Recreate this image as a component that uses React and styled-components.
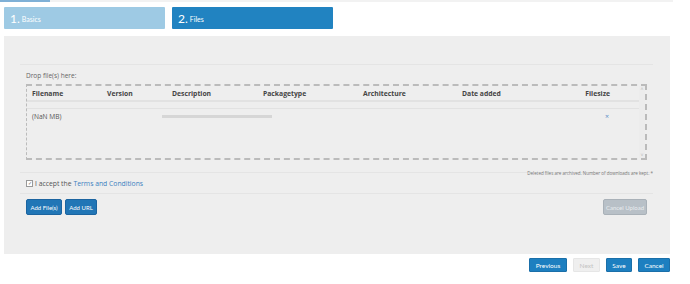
import styled, { createGlobalStyle } from "styled-components";

const Global = createGlobalStyle`
  body {
    margin: 0;
    background: #fff;
    font-family: "Open Sans", "Liberation Sans", sans-serif;
    color: #555;
  }
`;

const TopStrip = styled.div`
  display: flex;
  width: 673px;
  height: 2px;
  background: #f2f2f2;
`;

const TopMark = styled.div`
  width: 50px;
  background: #7fb0d6;
`;

const Steps = styled.div`
  display: flex;
  gap: 7px;
  padding: 5px 0 0 4px;
`;

const Step = styled.div`
  width: 161px;
  height: 22px;
  box-sizing: border-box;
  display: flex;
  align-items: center;
  padding-left: 6px;
  background: ${(p) => (p.active ? "#2183c1" : "#9ecae4")};
  border-radius: 1px;
  color: #fff;
  font-family: Lato, "Open Sans", sans-serif;
`;

const StepNum = styled.span`
  font-size: 12px;
  margin-right: 2px;
`;

const StepLabel = styled.span`
  font-size: 7px;
  padding-top: 2px;
`;

const Panel = styled.div`
  margin: 7px 0 0 4px;
  width: 666px;
  height: 218px;
  box-sizing: border-box;
  background: #eeeeee;
  padding: 0 17px 0 16px;
`;

const Rule = styled.div`
  height: ${(p) => p.h || 0}px;
  border-bottom: 1px solid #e4e4e4;
`;

const Inner = styled.div`
  padding: 0 6px;
`;

const DropLabel = styled.div`
  font-size: 6.5px;
  color: #666;
  padding: 6px 0 4px;
`;

const DropBox = styled.div`
  display: flex;
  height: 76px;
  box-sizing: border-box;
  border: 1px dashed #bbb;
  border-width: 2px 2px 2px 1px;
`;

const Table = styled.div`
  flex: 1;
`;

const HeadRow = styled.div`
  display: grid;
  grid-template-columns: 75px 65px 91px 100px 99px 100px 48px;
  height: 14px;
  align-items: center;
  padding-left: 5px;
  border-bottom: 2px solid #e2e2e2;
  font-size: 6.8px;
  font-weight: 700;
  color: #444;
`;

const Cell = styled.div`
  text-align: ${(p) => (p.right ? "right" : "left")};
  white-space: nowrap;
`;

const Spacer = styled.div`
  height: 6px;
  border-bottom: 1px solid #e2e2e2;
`;

const DataRow = styled.div`
  display: grid;
  grid-template-columns: 130px 110px 1fr 20px;
  height: 15px;
  align-items: center;
  padding-left: 5px;
  padding-right: 22px;
  font-size: 6.6px;
  color: #555;
`;

const Progress = styled.div`
  width: 110px;
  height: 3px;
  background: #d6d6d6;
`;

const Remove = styled.div`
  font-size: 7px;
  color: #5b8fc7;
  text-align: center;
`;

const Scroll = styled.div`
  width: 6px;
  display: flex;
  flex-direction: column;
  justify-content: space-between;
  align-items: center;
  font-size: 5px;
  color: #bbb;
  line-height: 6px;
  background: #ececec;
`;

const Note = styled.div`
  text-align: right;
  font-size: 4.5px;
  color: #777;
  padding: 10px 0 0;
  height: 13px;
  box-sizing: border-box;
  margin: 0 -6px;
  border-bottom: 1px solid #e4e4e4;
`;

const Accept = styled.div`
  display: flex;
  align-items: center;
  gap: 2px;
  height: 20px;
  font-size: 6.8px;
  color: #555;
  border-bottom: 1px solid #e4e4e4;
  margin: 0 -6px;
  padding-left: 6px;
`;

const Check = styled.span`
  width: 5px;
  height: 5px;
  border: 1px solid #999;
  display: inline-flex;
  align-items: center;
  justify-content: center;
  font-size: 5px;
  line-height: 1;
  color: #666;
  background: #fff;
`;

const Link = styled.span`
  color: #3a7fc0;
`;

const Actions = styled.div`
  display: flex;
  gap: 3px;
  padding-top: 5px;
`;

const Btn = styled.div`
  height: 16px;
  box-sizing: border-box;
  display: flex;
  align-items: center;
  justify-content: center;
  white-space: nowrap;
  font-family: Lato, "Open Sans", sans-serif;
  font-size: 6px;
  border-radius: 2px;
  color: ${(p) => (p.disabled ? (p.grey ? "#e8ecef" : "#c4c4c4") : "#fff")};
  background: ${(p) =>
    p.grey ? "#b8c0c7" : p.disabled ? "#ececec" : "#2176b6"};
  border: 1px solid
    ${(p) => (p.grey ? "#a9b1b8" : p.disabled ? "#e0e0e0" : "#1b64a0")};
  margin-left: ${(p) => (p.push ? "auto" : "0")};
  width: ${(p) => p.w}px;
`;

const Footer = styled.div`
  display: flex;
  justify-content: flex-end;
  gap: 6px;
  width: 670px;
  padding-top: 4px;
`;

const FootBtn = styled(Btn)`
  height: 14px;
  font-size: 6.5px;
  border-radius: 1px;
  background: ${(p) => (p.disabled ? "#efefef" : "#1d7fc0")};
  border-color: ${(p) => (p.disabled ? "#e6e6e6" : "#1a6fa9")};
`;

export default function App() {
  const headers = [
    "Filename",
    "Version",
    "Description",
    "Packagetype",
    "Architecture",
    "Date added",
  ];

  return (
    <>
      <Global />
      <TopStrip>
        <TopMark />
      </TopStrip>
      <Steps>
        <Step>
          <StepNum>1.</StepNum>
          <StepLabel>Basics</StepLabel>
        </Step>
        <Step active>
          <StepNum>2.</StepNum>
          <StepLabel>Files</StepLabel>
        </Step>
      </Steps>

      <Panel>
        <Rule h={28} />
        <Inner>
          <DropLabel>Drop file(s) here:</DropLabel>
          <DropBox>
            <Table>
              <HeadRow>
                {headers.map((h) => (
                  <Cell key={h}>{h}</Cell>
                ))}
                <Cell right>Filesize</Cell>
              </HeadRow>
              <Spacer />
              <DataRow>
                <Cell>(NaN MB)</Cell>
                <Progress />
                <span />
                <Remove>×</Remove>
              </DataRow>
            </Table>
            <Scroll>
              <span>˄</span>
              <span>˅</span>
            </Scroll>
          </DropBox>
          <Note>Deleted files are archived. Number of downloads are kept. *</Note>
          <Accept>
            <Check>✓</Check>I accept the <Link>Terms and Conditions</Link>
          </Accept>
          <Actions>
            <Btn w={36}>Add File(s)</Btn>
            <Btn w={32}>Add URL</Btn>
            <Btn grey disabled push w={44}>
              Cancel Upload
            </Btn>
          </Actions>
        </Inner>
      </Panel>

      <Footer>
        <FootBtn w={38}>Previous</FootBtn>
        <FootBtn disabled w={27}>
          Next
        </FootBtn>
        <FootBtn w={26}>Save</FootBtn>
        <FootBtn w={32}>Cancel</FootBtn>
      </Footer>
    </>
  );
}
